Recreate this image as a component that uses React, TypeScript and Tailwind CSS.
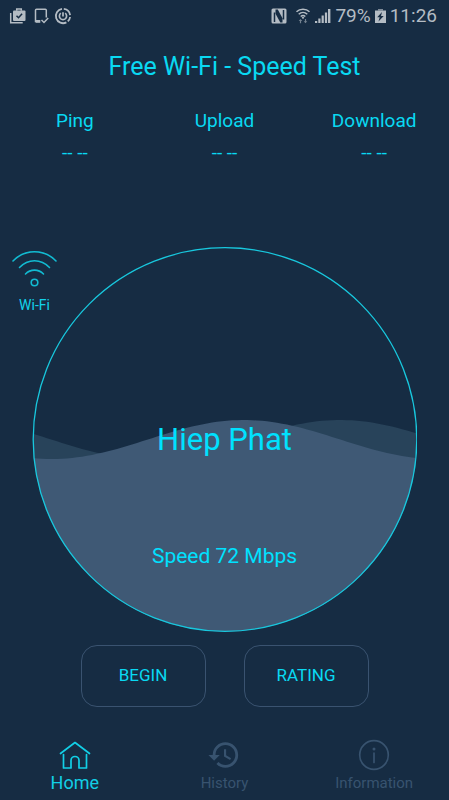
import { MdHistory } from "react-icons/md";

const stats = [
  { label: "Ping", value: "-- --" },
  { label: "Upload", value: "-- --" },
  { label: "Download", value: "-- --" },
];

// One full sine period across the dial, filled down to the bottom
function wavePath(crest: number) {
  let d = "M0 385";
  for (let x = 0; x <= 385; x += 5) {
    const y = 192.5 - 19.5 * Math.cos(((x - crest) / 385) * Math.PI * 2);
    d += ` L${x} ${y.toFixed(2)}`;
  }
  return d + " L385 385 Z";
}

function StatusBar() {
  return (
    <div className="flex h-8 items-center justify-between px-2 pr-3 text-[#b4bcc4]">
      <div className="flex items-center gap-2">
        <svg width="18" height="18" viewBox="0 0 18 18" fill="none">
          <path d="M2.7 6v9.8h12" stroke="currentColor" strokeWidth="1.5" />
          <path d="M8.7 3.8V1.9h4.6v1.9" stroke="currentColor" strokeWidth="1.5" />
          <rect x="5" y="3.5" width="12.5" height="10.5" rx="1" fill="currentColor" />
          <path d="M8.5 8.7l2 2 3.6-4" stroke="#162c43" strokeWidth="1.5" />
        </svg>
        <svg width="16" height="18" viewBox="0 0 16 18" fill="none" stroke="currentColor" strokeWidth="1.5">
          <path d="M6 14.5H1.5V3.2c0-.6.4-1 1-1h8.800c.6 0 1 .4 1 1v7.3" />
          <path d="M1.5 13h4.8v2.8H2.5c-.6 0-1-.4-1-1z" fill="currentColor" stroke="none" />
          <path d="M7.5 13l2.5 2.5 4.2-4.5" />
        </svg>
        <svg className="-ml-1" width="18" height="18" viewBox="0 0 18 18" fill="none" stroke="currentColor">
          <path d="M9.8 1.9a7.2 7.2 0 0 1 6.3 6.3M16.1 10a7.2 7.2 0 0 1-2.3 4.4M12.4 15.400A7.200 7.200 0 1 1 8 1.900" strokeWidth="1.8" />
          <path d="M6.8 6.200a3.600 3.600 0 1 0 4.400 0" strokeWidth="1.7" />
          <path d="M9 5.200v4.300" strokeWidth="1.7" />
        </svg>
      </div>
      <div className="flex items-center">
        <svg width="16" height="16" viewBox="0 0 16 16" fill="none">
          <rect x="0.5" y="0.5" width="15" height="15" rx="1.5" fill="currentColor" />
          <path d="M3.5 14V4.5M12.5 2v9.5" stroke="#162c43" strokeWidth="1.5" />
          <path d="M4.500 1.500h2.300l4.700 8.700v4.300H9.300L4.500 5.700z" fill="#162c43" />
        </svg>
        <svg className="ml-2" width="16" height="16" viewBox="0 0 16 16" fill="none" stroke="currentColor" strokeWidth="1.5">
          <path d="M1.500 3.800C5 .3 11 .3 14.500 3.800M3.700 6.200c2.500-2.300 6.100-2.300 8.600 0M5.700 8.500c1.400-1.200 3.200-1.200 4.600 0" />
          <path d="M8 8.500l1.400 1.300L8 11.100 6.600 9.800z" fill="currentColor" stroke="none" />
          <path d="M3.700 13l1.800-2 1.800 2H6.100v2.200H4.900V13zM8.700 13.200h1.200V11h1.200v2.200h1.200l-1.800 2z" fill="currentColor" stroke="none" opacity="0.6" />
        </svg>
        <svg className="ml-1" width="16" height="16" viewBox="0 0 16 16" fill="currentColor">
          <path d="M0 13h2.2v2H0zM3.3 10.5h2.2V15H3.3zM6.6 7.5h2.2V15H6.6zM9.9 4.5h2.2V15H9.9zM13 1h2.4v14H13z" />
        </svg>
        <span className="ml-1 text-[19px] leading-8">79%</span>
        <svg className="ml-1" width="11" height="16" viewBox="0 0 11 16">
          <path d="M3 1h5v1.6H3z" fill="#7f8b98" />
          <path d="M0 2.5h11V15H0z" fill="currentColor" />
          <path d="M7 4L2.2 9.3h2.5L3.5 13.5l5.2-5.4H6z" fill="#162c43" />
        </svg>
        <span className="ml-1 text-[19px] leading-8">11:26</span>
      </div>
    </div>
  );
}

function WifiBadge() {
  return (
    <div className="absolute left-3 top-0 flex flex-col items-center text-[#12d3ea]">
      <svg width="45" height="40" viewBox="0 0 45 40" fill="none" stroke="currentColor" strokeWidth="1.6" strokeLinecap="round">
        <path d="M1 14C13 1.6 32 1.6 44 14" opacity="0.85" />
        <path d="M7.5 20.5C16 11.5 29 11.5 37.5 20.5" opacity="0.85" />
        <path d="M13.5 27C18.5 21.8 26.5 21.8 31.5 27" opacity="0.85" />
        <circle cx="22.5" cy="35.5" r="3.3" opacity="0.85" />
      </svg>
      <span className="mt-2 text-sm leading-5">Wi-Fi</span>
    </div>
  );
}

function Gauge() {
  return (
    <section className="relative">
      <WifiBadge />
      <div className="px-8">
        <div className="relative">
          <svg className="block w-full" viewBox="0 0 385 385">
            <defs>
              <clipPath id="dial">
                <circle cx="193" cy="192.5" r="192" />
              </clipPath>
            </defs>
            <g clipPath="url(#dial)">
              <path d={wavePath(308)} fill="#28435a" />
              <path d={wavePath(212)} fill="#3f5975" />
            </g>
            <circle cx="193" cy="192.5" r="191.8" fill="none" stroke="#18c8de" strokeWidth="1.3" />
          </svg>
          <div className="absolute inset-0 flex flex-col items-center pt-[45%] text-[#00e1ff]">
            <p className="text-[31px] leading-10">Hiep Phat</p>
            <p className="mt-20 text-[21px] leading-8">Speed 72 Mbps</p>
          </div>
        </div>
      </div>
    </section>
  );
}

function HomeIcon() {
  return (
    <svg width="32" height="30" viewBox="0 0 32 30" fill="none" stroke="currentColor" strokeWidth="1.7" strokeLinecap="round" strokeLinejoin="round">
      <path d="M1.5 13.5L16 2.5l14.5 11" />
      <path d="M4.5 14.5v13.5h7.5v-7.5a4 4 0 0 1 8 0V28h7.5V14.5" />
    </svg>
  );
}

function InfoIcon() {
  return (
    <svg width="32" height="32" viewBox="0 0 32 32" fill="none" stroke="currentColor" strokeWidth="1.7" strokeLinecap="round">
      <circle cx="16" cy="16" r="14.3" />
      <path d="M16 14v9.5" />
      <circle cx="16" cy="10" r="1.5" fill="currentColor" stroke="none" />
    </svg>
  );
}

export default function App() {
  return (
    <main className="min-h-screen bg-[#162c43] font-['Roboto',sans-serif] text-[#09d9f2]">
      <StatusBar />

      <h1 className="mt-[17px] pl-5 text-center text-[25px] leading-9">Free Wi-Fi - Speed Test</h1>

      <dl className="mt-6 grid grid-cols-3 text-center text-[19px] leading-6">
        {stats.map((s) => (
          <div key={s.label}>
            <dt>{s.label}</dt>
            <dd className="mt-2">{s.value}</dd>
          </div>
        ))}
      </dl>

      <div className="mt-[82px]">
        <Gauge />
      </div>

      <div className="mt-[13px] flex justify-center gap-[38px]">
        <button className="h-[62px] w-[125px] rounded-2xl border border-[#3a5370] text-[17px]">BEGIN</button>
        <button className="h-[62px] w-[125px] rounded-2xl border border-[#3a5370] text-[17px]">RATING</button>
      </div>

      <nav className="mt-8 grid grid-cols-3 text-center text-[15px] leading-6 text-[#38536f]">
        <a href="#home" className="flex flex-col items-center text-[18px] text-[#12cfe6]">
          <span className="flex h-8 items-center">
            <HomeIcon />
          </span>
          Home
        </a>
        <a href="#history" className="flex flex-col items-center">
          <span className="flex h-8 items-center">
            <MdHistory size={34} />
          </span>
          History
        </a>
        <a href="#information" className="flex flex-col items-center">
          <span className="flex h-8 items-center">
            <InfoIcon />
          </span>
          Information
        </a>
      </nav>
    </main>
  );
}
